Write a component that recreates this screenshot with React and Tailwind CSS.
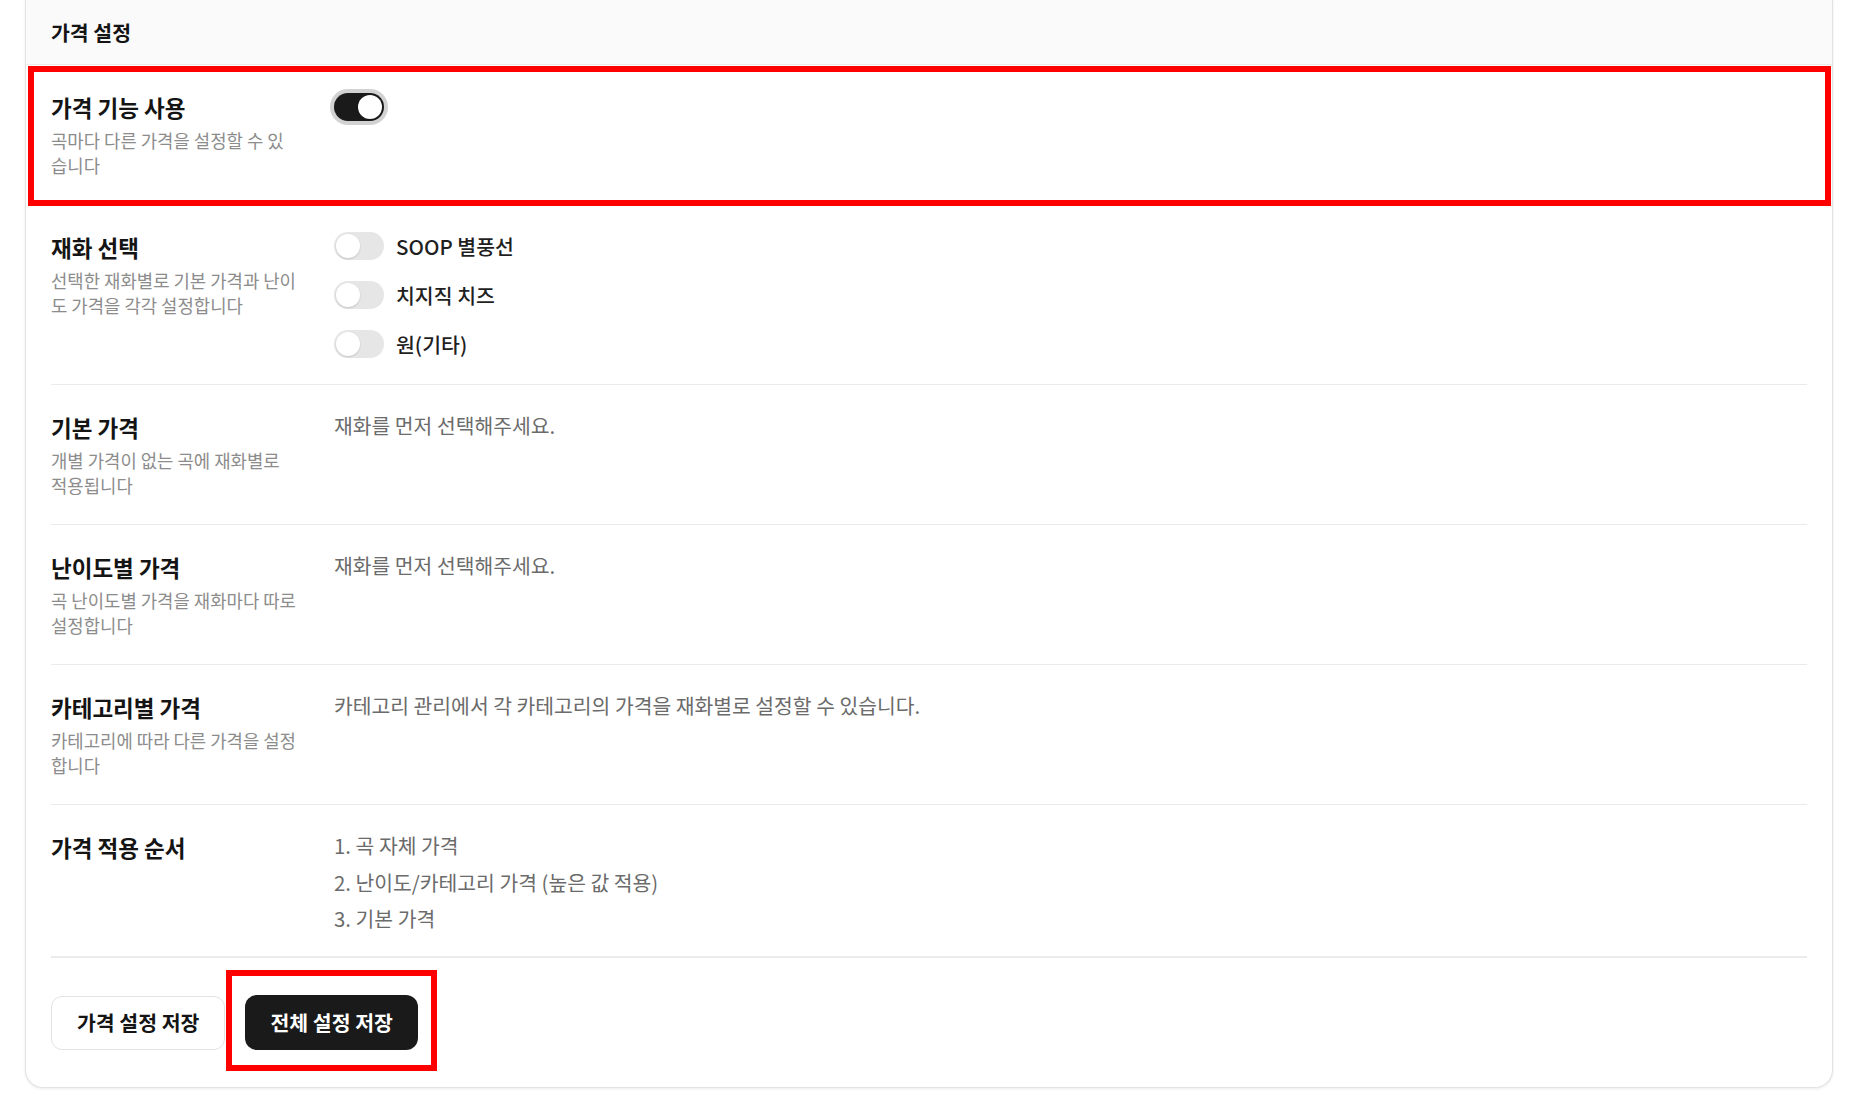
import React, { useState } from 'react'

const Toggle = ({ on, onClick }) => (
  <button
    onClick={onClick}
    className={`relative w-[50px] h-[28px] rounded-full shrink-0 transition-colors ${
      on ? 'bg-[#1a1a1a] ring-4 ring-[#d2d2d2]' : 'bg-[#e6e6e6]'
    }`}
  >
    <span
      className={`absolute top-[2px] w-[24px] h-[24px] rounded-full bg-white shadow-[0_1px_2px_rgba(0,0,0,0.15)] transition-all ${
        on ? 'left-[24px]' : 'left-[2px]'
      }`}
    />
  </button>
)

const Row = ({ title, desc, children, last }) => (
  <div className={`flex gap-[38px] pt-[28px] pb-[26px] ${last ? '' : 'border-b border-[#ebebeb]'}`}>
    <div className="w-[245px] shrink-0">
      <div className="text-[22.5px] leading-[28px] font-semibold text-[#141414]">{title}</div>
      {desc && (
        <p className="mt-[7px] text-[17.8px] leading-[25px] text-[#8c8c8c]">{desc}</p>
      )}
    </div>
    <div className="flex-1 min-w-0">{children}</div>
  </div>
)

const Note = ({ children }) => (
  <p className="text-[20.4px] leading-[24px] text-[#6b6b6b]">{children}</p>
)

export default function App() {
  const [enabled, setEnabled] = useState(true)
  const [currency, setCurrency] = useState({ soop: false, chzzk: false, won: false })

  const currencies = [
    { key: 'soop', label: 'SOOP 별풍선' },
    { key: 'chzzk', label: '치지직 치즈' },
    { key: 'won', label: '원(기타)' },
  ]

  return (
    <div
      className="min-h-screen bg-white"
      style={{ fontFamily: '"Noto Sans CJK KR", "Noto Sans", sans-serif' }}
    >
      <div className="relative ml-[25px] w-[1808px] bg-white border border-t-0 border-[#e3e3e3] rounded-b-[18px] shadow-[0_1px_3px_rgba(0,0,0,0.08)]">
        {/* Header */}
        <div className="h-[65px] flex items-center px-[25px] bg-[#fafafa] border-b border-[#ebebeb]">
          <h2 className="text-[20.5px] font-semibold text-[#141414]">가격 설정</h2>
        </div>

        <div className="px-[25px]">
          {/* 가격 기능 사용 */}
          <div className="relative">
            <Row title="가격 기능 사용" desc="곡마다 다른 가격을 설정할 수 있습니다">
              <Toggle on={enabled} onClick={() => setEnabled(!enabled)} />
            </Row>
            <div className="absolute -left-[23px] -right-[24px] top-[1px] -bottom-[1px] border-[6px] border-[#ff0000] pointer-events-none" />
          </div>

          <Row title="재화 선택" desc="선택한 재화별로 기본 가격과 난이도 가격을 각각 설정합니다">
            <div className="flex flex-col gap-[21px] -mt-[1px]">
              {currencies.map((c) => (
                <div key={c.key} className="flex items-center gap-[12px] h-[28px]">
                  <Toggle
                    on={currency[c.key]}
                    onClick={() => setCurrency({ ...currency, [c.key]: !currency[c.key] })}
                  />
                  <span className="text-[20.5px] font-medium text-[#1f1f1f]">{c.label}</span>
                </div>
              ))}
            </div>
          </Row>

          <Row title="기본 가격" desc="개별 가격이 없는 곡에 재화별로 적용됩니다">
            <Note>재화를 먼저 선택해주세요.</Note>
          </Row>

          <Row title="난이도별 가격" desc="곡 난이도별 가격을 재화마다 따로 설정합니다">
            <Note>재화를 먼저 선택해주세요.</Note>
          </Row>

          <Row title="카테고리별 가격" desc="카테고리에 따라 다른 가격을 설정합니다">
            <Note>카테고리 관리에서 각 카테고리의 가격을 재화별로 설정할 수 있습니다.</Note>
          </Row>

          <Row title="가격 적용 순서">
            <div className="flex flex-col gap-[12.5px]">
              <Note>1. 곡 자체 가격</Note>
              <Note>2. 난이도/카테고리 가격 (높은 값 적용)</Note>
              <Note>3. 기본 가격</Note>
            </div>
          </Row>

          {/* Actions */}
          <div className="flex items-center gap-[20px] border-t border-[#ebebeb] pt-[37px] pb-[37px]">
            <button className="h-[54px] px-[25px] rounded-[11px] border border-[#e3e3e3] bg-white text-[20.5px] font-semibold text-[#141414]">
              가격 설정 저장
            </button>
            <div className="relative">
              <button className="h-[55px] px-[25px] rounded-[12px] bg-[#1a1a1a] text-[20.5px] font-bold text-white">
                전체 설정 저장
              </button>
              <div className="absolute -left-[19px] -right-[19px] -top-[25px] -bottom-[21px] border-[6px] border-[#ff0000] pointer-events-none" />
            </div>
          </div>
        </div>
      </div>
    </div>
  )
}
